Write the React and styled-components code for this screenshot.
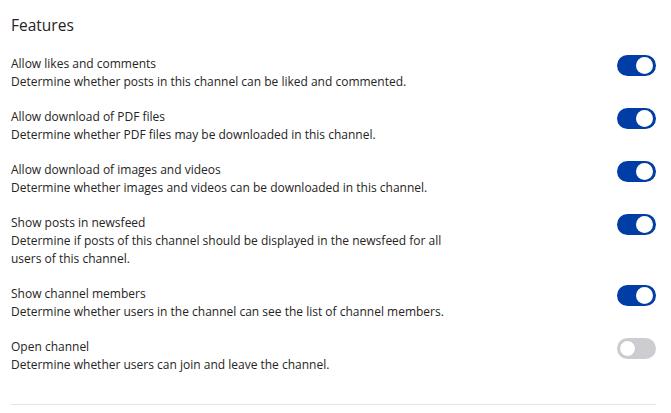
import React, { useState } from "react";
import styled, { createGlobalStyle } from "styled-components";

const GlobalStyle = createGlobalStyle`
  html, body { margin: 0; padding: 0; background: #ffffff; }
  body { font-family: "Open Sans", "Noto Sans", Arial, sans-serif; color: #252423; }
`;

const Page = styled.div`
  width: 671px;
  padding: 14px 15px 0 11px;
  box-sizing: border-box;
`;

const Heading = styled.h2`
  margin: 0 0 19px 0;
  font-size: 15.5px;
  line-height: 22px;
  font-weight: 400;
  color: #252423;
`;

const List = styled.div`
  display: flex;
  flex-direction: column;
  gap: 17px;
  padding-bottom: 30px;
  border-bottom: 1px solid #e6e6e6;
`;

const Row = styled.div`
  display: flex;
  align-items: flex-start;
  justify-content: space-between;
  gap: 24px;
`;

const Text = styled.div`
  max-width: 460px;
`;

const Title = styled.div`
  font-size: 12px;
  line-height: 18px;
  color: #252423;
`;

const Desc = styled.div`
  font-size: 12px;
  line-height: 18px;
  color: #252423;
`;

const Switch = styled.button`
  position: relative;
  flex: none;
  width: 39px;
  height: 21px;
  padding: 0;
  border: none;
  border-radius: 11px;
  background: ${(p) => (p.$on ? "#003da5" : "#cdcdd1")};
  cursor: pointer;
  &::after {
    content: "";
    position: absolute;
    top: 2px;
    left: ${(p) => (p.$on ? "19px" : "2px")};
    width: 17px;
    height: 17px;
    border-radius: 50%;
    background: #ffffff;
    box-sizing: border-box;
    border: ${(p) => (p.$on ? "none" : "1px solid #c4c4c8")};
  }
`;

const items = [
  { t: "Allow likes and comments", d: "Determine whether posts in this channel can be liked and commented.", on: true },
  { t: "Allow download of PDF files", d: "Determine whether PDF files may be downloaded in this channel.", on: true },
  { t: "Allow download of images and videos", d: "Determine whether images and videos can be downloaded in this channel.", on: true },
  { t: "Show posts in newsfeed", d: "Determine if posts of this channel should be displayed in the newsfeed for all users of this channel.", on: true },
  { t: "Show channel members", d: "Determine whether users in the channel can see the list of channel members.", on: true },
  { t: "Open channel", d: "Determine whether users can join and leave the channel.", on: false },
];

export default function App() {
  const [state, setState] = useState(items.map((i) => i.on));
  return (
    <Page>
      <GlobalStyle />
      <Heading>Features</Heading>
      <List>
        {items.map((it, i) => (
          <Row key={it.t}>
            <Text>
              <Title>{it.t}</Title>
              <Desc>{it.d}</Desc>
            </Text>
            <Switch
              $on={state[i]}
              aria-label={it.t}
              onClick={() => setState((s) => s.map((v, j) => (j === i ? !v : v)))}
            />
          </Row>
        ))}
      </List>
    </Page>
  );
}
